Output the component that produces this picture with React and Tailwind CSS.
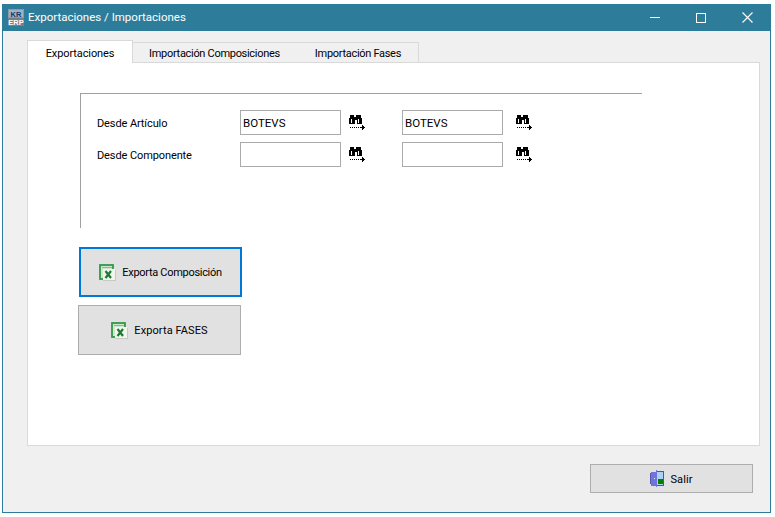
import React from "react";

const font = "font-['Roboto',sans-serif]";

function AppIcon() {
  return (
    <svg width="16" height="17" viewBox="0 0 16 17" className="shrink-0" shapeRendering="crispEdges">
      <rect width="16" height="17" fill="#8a9aa8" />
      <rect x="1" y="1" width="14" height="7" fill="#9fb2c4" />
      <text x="8" y="7.5" textAnchor="middle" fontSize="7.5" fontWeight="700" fontFamily="Liberation Sans" fill="#123a66">KR</text>
      <rect x="0" y="9" width="16" height="8" fill="#77808a" />
      <text x="8" y="16" textAnchor="middle" fontSize="7.5" fontWeight="700" fontFamily="Liberation Sans" fill="#ffffff">ERP</text>
    </svg>
  );
}

function Binoculars() {
  return (
    <svg width="17" height="16" viewBox="0 0 17 16" className="shrink-0" shapeRendering="crispEdges">
      <path d="M2 0h3v2h2V0h3v0h2v3h1v6H8V5H6v4H0V3h1V0z" fill="#000" />
      <rect x="2" y="4" width="1" height="4" fill="#fff" />
      <rect x="9" y="4" width="1" height="4" fill="#fff" />
      <path d="M1 12.5h1M3 12.5h1M5 12.5h1M7 12.5h1M9 12.5h1M11 12.5h1" stroke="#000" />
      <path d="M12 12.5h4" stroke="#000" />
      <path d="M13 10h1v1h1v3h-1v1h-1z" fill="#000" />
    </svg>
  );
}

function ExcelIcon() {
  return (
    <svg width="17" height="17" viewBox="0 0 17 17" className="shrink-0">
      <rect x="4" y="6" width="13" height="11" fill="#c9c9c4" />
      <rect x="1" y="1" width="13" height="14" fill="#cfe5cd" stroke="#2f9a4a" strokeWidth="1.8" />
      <path d="M3 3.5h10" stroke="#7fc08e" />
      <rect x="4" y="5" width="12" height="11" fill="#f2f5ee" />
      <path d="M6.5 7l5.5 7M12 7l-5.5 7" stroke="#1d7a33" strokeWidth="2.2" />
    </svg>
  );
}

function DoorIcon() {
  return (
    <svg width="14" height="17" viewBox="0 0 14 17" className="shrink-0" shapeRendering="crispEdges">
      <rect x="6" y="1" width="8" height="15" fill="#4a5a90" />
      <rect x="7" y="2" width="6" height="13" fill="#a9d2f5" />
      <rect x="8" y="9" width="5" height="5" fill="#008000" />
      <path d="M1 2h5V0h1v17H6v-1H1z" fill="#7272dc" />
      <rect x="0" y="3" width="1" height="11" fill="#5858b0" />
      <rect x="4" y="8" width="1" height="1" fill="#e8e8ff" />
    </svg>
  );
}

function WindowControls() {
  return (
    <div className="flex items-center text-white">
      <div className="flex h-[27px] w-[46px] items-center justify-center">
        <div className="h-px w-[10px] bg-white" />
      </div>
      <div className="flex h-[27px] w-[46px] items-center justify-center">
        <div className="size-[10px] border border-white" />
      </div>
      <div className="flex h-[27px] w-[46px] items-center justify-center">
        <svg width="11" height="11" viewBox="0 0 11 11">
          <path d="M0.5 0.5l10 10M10.5 0.5l-10 10" stroke="#fff" strokeWidth="1.1" />
        </svg>
      </div>
    </div>
  );
}

function Field({ value, className = "" }) {
  return (
    <div className={`flex h-[25px] w-[101px] items-center border border-[#ababab] bg-white pl-[2px] pt-[2px] text-[11.5px] text-black ${className}`}>
      {value}
    </div>
  );
}

function SearchRow({ label, value }) {
  return (
    <div className="flex h-[25px] items-center">
      <div className="w-[143px] pt-[4px] text-[11px] tracking-[-0.1px] text-black">{label}</div>
      <Field value={value} />
      <div className="ml-[8px] w-[53px]">
        <Binoculars />
      </div>
      <Field value={value} />
      <div className="ml-[13px]">
        <Binoculars />
      </div>
    </div>
  );
}

function ActionButton({ icon, label, className = "", gap = "gap-[5px]", labelClass = "tracking-[-0.3px]" }) {
  return (
    <div className={`flex w-[163px] items-center justify-center bg-[#e1e1e1] text-[11px] text-black ${gap} ${className}`}>
      {icon}
      <span className={`pt-[3px] ${labelClass}`}>{label}</span>
    </div>
  );
}

export default function App() {
  return (
    <div className={`h-[517px] w-[775px] overflow-hidden bg-white pl-[2px] pt-[4px] ${font}`}>
      <div className="flex h-[509px] w-[769px] flex-col border-x border-b border-[#2d7d9a] bg-[#f0f0f0]">
        <div className="flex h-[27px] items-center justify-between bg-[#2d7d9a] pl-[5px]">
          <div className="flex items-center gap-[4px]">
            <AppIcon />
            <span className="text-[11.5px] text-white">Exportaciones / Importaciones</span>
          </div>
          <WindowControls />
        </div>

        <div className="pl-[24px] pt-[9px]">
          <div className="flex h-[22px] items-end">
            <div className="z-10 -mb-px flex h-[23px] w-[106px] items-center justify-center border-x border-t border-[#d9d9d9] bg-white pt-[5px] text-[11px] tracking-[-0.1px] text-black">
              Exportaciones
            </div>
            <div className="flex h-[20px] w-[286px] items-center whitespace-nowrap border-r border-t border-[#d9d9d9] bg-[#f0f0f0] pt-[4px] text-[11px] tracking-[-0.3px] text-black">
              <span className="ml-[16px]">Importación Composiciones</span>
              <span className="ml-[35px]">Importación Fases</span>
            </div>
          </div>

          <div className="h-[384px] w-[733px] border border-[#d9d9d9] bg-white pl-[50px] pt-[30px]">
            <div className="ml-[2px] h-[135px] w-[562px] border-l border-t border-[#a0a0a0] pl-[16px] pt-[16px]">
              <div className="flex flex-col gap-[7px]">
                <SearchRow label="Desde Artículo" value="BOTEVS" />
                <SearchRow label="Desde Componente" value="" />
              </div>
            </div>
            <ActionButton
              icon={<ExcelIcon />}
              label="Exporta Composición"
              gap="gap-[6px]"
              className="ml-[1px] mt-[19px] h-[50px] border-2 border-[#0078d7]"
            />
            <ActionButton
              icon={<ExcelIcon />}
              label="Exporta FASES"
              gap="gap-[6px]"
              labelClass="tracking-[0.1px]"
              className="mt-[8px] h-[50px] border border-[#adadad]"
            />
          </div>
        </div>

        <div className="flex justify-end pr-[17px] pt-[18px]">
          <ActionButton
            icon={<DoorIcon />}
            label="Salir"
            gap="gap-[6px]"
            labelClass="tracking-[0.1px]"
            className="h-[29px] border border-[#adadad]"
          />
        </div>
      </div>
    </div>
  );
}
